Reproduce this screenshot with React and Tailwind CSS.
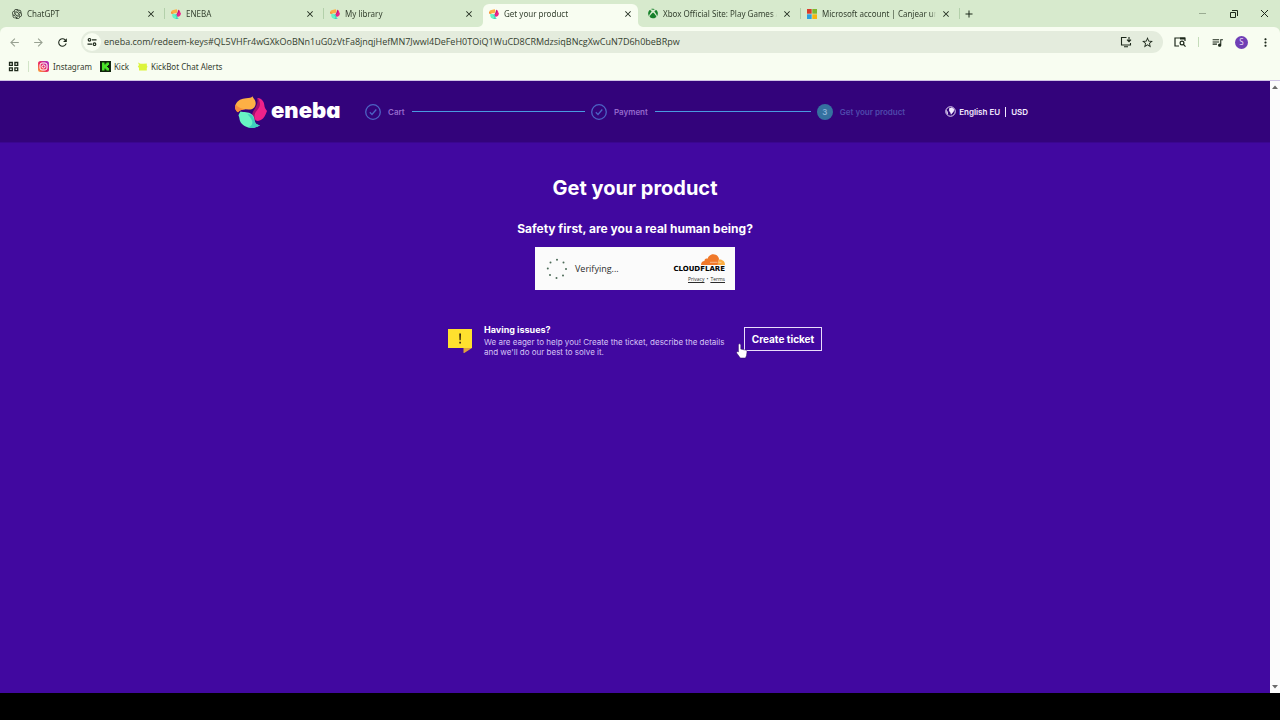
import { SiOpenai } from "react-icons/si";
import { FaXbox } from "react-icons/fa";
import {
  MdArrowBack,
  MdArrowForward,
  MdRefresh,
  MdStarBorder,
  MdMoreVert,
  MdOutlineQueueMusic,
  MdClose,
  MdAdd,
} from "react-icons/md";

function EnebaMark({ className }) {
  return (
    <svg viewBox="0 0 32 32" className={className} aria-hidden="true">
      <path d="M17.500 0.300c.6 2 3.300 3.500 3.200 7.200-.2 4.300-3.700 6.500-7.700 6-4-.5-7.500.2-10 2.800C.3 14.300-.5 11.500.7 8.500 2.300 4.300 7 2.500 11 2.300c3.300-.2 5.500-.5 6.500-2z" fill="#fdb045" />
      <path d="M3 16.300C-.2 14.500-.4 11 .7 8.500c2 3 6 4.500 12.300 5-4-.5-7.500.2-10 2.800z" fill="#f78a3d" />
      <path d="M22.500 2c4.500.5 6.500 3.500 6.800 7 .2 2.500 1.200 4 2.700 6-1 2-1.500 5-4 7.500-2.500 2.200-5.500 3-7 2-2.500-1.500-3-5-1-8.500 2-3.400 4-8 2.500-14z" fill="#f02289" />
      <path d="M22.500 2c2.500 2.500 3 5.500 2 8.500-1 3-5 5.500-5 9.500 0 2 .5 3.500 1.500 4.500-3-1-4.500-4-3.500-7.500C18.700 13 23.500 10 22.500 2z" fill="#a3106f" />
      <path d="M5.500 15.500c3 1 8-.2 11.500 3 3 2.700 2 6 3.500 8.500 1 1.600 2.500 2 4.500 2.200-3 2.300-8 3.300-12.500 2C7.500 29.700 5 26.500 4.500 23c-.2-1.500-.5-2.500-1-3.500.3-1.500 1.200-2.800 2-4z" fill="#68f4c4" />
      <path d="M13 31.300c4-1 5.500-4.300 3.500-7.800-1-1.700-2-3-4-5.300 2 0 3.500.2 4.500 1.300 2.500 2.500 2 5.500 3.500 7.500 1 1.600 2.500 2 4.500 2.200-3 2.300-7.500 3.300-12 2.100z" fill="#3fd0bd" />
    </svg>
  );
}

function MicrosoftMark({ className }) {
  return (
    <svg viewBox="0 0 10 10" className={className} aria-hidden="true">
      <path d="M0 0h4.700v4.700H0z" fill="#d83b2b" />
      <path d="M5.300 0H10v4.700H5.300z" fill="#7cb82f" />
      <path d="M0 5.300h4.700V10H0z" fill="#2b9fe0" />
      <path d="M5.300 5.300H10V10H5.300z" fill="#f5b50f" />
    </svg>
  );
}

const tabs = [
  { title: "ChatGPT", icon: <SiOpenai className="size-[10px] text-[#1d281b]" /> },
  { title: "ENEBA", icon: <EnebaMark className="size-[10px]" /> },
  { title: "My library", icon: <EnebaMark className="size-[10px]" /> },
  { title: "Get your product", icon: <EnebaMark className="size-[10px]" />, active: true },
  { title: "Xbox Official Site: Play Games A", icon: <FaXbox className="size-[11px] text-[#16802a]" /> },
  { title: "Microsoft account | Canjear un", icon: <MicrosoftMark className="size-[10px]" /> },
];

function Tab({ title, icon, active, divider }) {
  return (
    <li className="relative flex h-full w-[159px] min-w-0 items-end">
      <div
        className={
          active
            ? "relative flex h-[23px] w-[155px] items-center gap-[5px] rounded-t-md bg-[#f8fdf1] pr-[5px] pb-1 pl-[6px]"
            : "flex h-[23px] w-[155px] items-center gap-[5px] pr-[5px] pb-1 pl-[6px]"
        }
      >
        {active && (
          <>
            <svg viewBox="0 0 5 5" className="absolute bottom-0 -left-[5px] size-[5px]" aria-hidden="true">
              <path d="M5 0v5H0a5 5 0 0 0 5-5z" fill="#f8fdf1" />
            </svg>
            <svg viewBox="0 0 5 5" className="absolute -right-[5px] bottom-0 size-[5px]" aria-hidden="true">
              <path d="M0 0v5h5a5 5 0 0 1-5-5z" fill="#f8fdf1" />
            </svg>
          </>
        )}
        <span className="flex w-[10px] shrink-0 justify-center">{icon}</span>
        <a href="#" className="min-w-0 flex-1 mask-r-from-95% whitespace-nowrap text-[#34402f]">
          {title}
        </a>
        <button type="button" aria-label={"Close " + title} className="text-[#1d281b]">
          <MdClose className="size-[10px]" />
        </button>
      </div>
      {divider && <span className="absolute right-0 bottom-2 h-[11px] w-px bg-[#b3d0aa]" />}
    </li>
  );
}

function TabStrip() {
  return (
    <div className="flex h-[27px] items-center pl-[6px]">
      <ul className="flex h-full min-w-0">
        {tabs.map((tab, i) => (
          <Tab key={i} {...tab} divider={i !== 2 && i !== 3} />
        ))}
      </ul>
      <button type="button" aria-label="New tab" className="ml-[3px] text-[#1d281b]">
        <MdAdd className="size-[12px]" />
      </button>
      <div className="ml-auto flex items-center gap-5 pr-[10px] text-[#1d281b]">
        <button type="button" aria-label="Minimize" className="flex size-[11px] items-center justify-center">
          <span className="h-px w-[7px] bg-[#9aab92]" />
        </button>
        <button type="button" aria-label="Restore">
          <svg viewBox="0 0 11 11" className="size-[11px]" fill="none" stroke="currentColor" aria-hidden="true">
            <path d="M2.500 4.500h5v5h-5zM4 2.500h5.500V8" />
          </svg>
        </button>
        <button type="button" aria-label="Close window">
          <svg viewBox="0 0 11 11" className="size-[11px]" fill="none" stroke="currentColor" aria-hidden="true">
            <path d="M2 2l7 7M9 2l-7 7" />
          </svg>
        </button>
      </div>
    </div>
  );
}

function Toolbar() {
  return (
    <div className="flex h-[30px] items-center rounded-t-md bg-[#f8fdf1] px-2 text-[#1d281b]">
      <div className="flex items-center gap-[11px]">
        <button type="button" aria-label="Back" className="text-[#98a192]">
          <MdArrowBack className="size-[13px]" />
        </button>
        <button type="button" aria-label="Forward" className="text-[#98a192]">
          <MdArrowForward className="size-[13px]" />
        </button>
        <button type="button" aria-label="Reload">
          <MdRefresh className="size-[13px]" />
        </button>
      </div>
      <div className="ml-3 flex h-[22px] min-w-0 flex-1 items-center rounded-full bg-[#e4ecdd] pr-[9px] pl-[2px]">
        <button
          type="button"
          aria-label="Site information"
          className="flex size-[18px] shrink-0 items-center justify-center rounded-full bg-[#f8fdf1]"
        >
          <svg viewBox="0 0 10 10" className="size-[10px]" fill="none" stroke="currentColor" strokeWidth="1.200" aria-hidden="true">
            <circle cx="2.500" cy="2.800" r="1.300" />
            <path d="M5 2.800h4.500M.5 7.200H5" />
            <circle cx="7.500" cy="7.200" r="1.300" />
          </svg>
        </button>
        <input
          type="text"
          aria-label="Address"
          defaultValue="eneba.com/redeem-keys#QL5VHFr4wGXkOoBNn1uG0zVtFa8jnqjHefMN7Jwwl4DeFeH0TOiQ1WuCD8CRMdzsiqBNcgXwCuN7D6h0beBRpw"
          className="ml-[3px] min-w-0 flex-1 bg-transparent font-['Open_Sans',sans-serif] text-[9px] text-[#34402f] outline-none"
        />
        <button type="button" aria-label="Install app">
          <svg viewBox="0 0 12 12" className="size-[12px]" fill="none" stroke="currentColor" strokeWidth="1.100" aria-hidden="true">
            <path d="M6.500 1.500h-5v7.500h9V7M4 10.700h4M9 1v4.500M7 3.700l2 2 2-2" />
          </svg>
        </button>
        <button type="button" aria-label="Bookmark this page" className="ml-[9px]">
          <MdStarBorder className="size-[13px]" />
        </button>
      </div>
      <button type="button" aria-label="Search side panel" className="ml-[11px]">
        <svg viewBox="0 0 12 12" className="size-[12px]" fill="none" stroke="currentColor" strokeWidth="1.200" aria-hidden="true">
          <path d="M5 10H1V2h10v3" />
          <path d="M6 2.500h5" strokeWidth="2" />
          <circle cx="8" cy="7" r="1.900" />
          <path d="M9.400 8.400l2.100 2.300" />
        </svg>
      </button>
      <span className="mx-3 h-[10px] w-px bg-[#c5dcba]" />
      <button type="button" aria-label="Media controls">
        <MdOutlineQueueMusic className="size-[13px]" />
      </button>
      <button
        type="button"
        aria-label="Profile"
        className="ml-[11px] flex size-[13px] items-center justify-center rounded-full bg-[#6f3fb5] text-[8px] text-[#eadcf8]"
      >
        S
      </button>
      <button type="button" aria-label="Menu" className="ml-[11px]">
        <MdMoreVert className="size-[13px]" />
      </button>
    </div>
  );
}

function Bookmarks() {
  return (
    <nav aria-label="Bookmarks" className="flex h-[23px] items-center bg-[#f8fdf1] pb-1 pl-2 text-[#34402f]">
      <button type="button" aria-label="All apps">
        <svg viewBox="0 0 11 11" className="size-[11px]" fill="none" stroke="#1d281b" strokeWidth="1.300" aria-hidden="true">
          <path d="M1.500 1.500h2.800v2.800H1.500zM6.900 1.500h2.800v2.800H6.900zM1.500 6.900h2.800v2.800H1.500zM6.900 6.900h2.800v2.800H6.900z" />
        </svg>
      </button>
      <span className="mx-[9px] h-[11px] w-px bg-[#d2e4c8]" />
      <a href="#" className="flex items-center gap-1">
        <svg viewBox="0 0 11 11" className="size-[11px]" fill="none" aria-hidden="true">
          <defs>
            <linearGradient id="insta" x1="0" y1="1" x2="1" y2="0">
              <stop offset="0" stopColor="#fbb03b" />
              <stop offset="0.450" stopColor="#ee2a5f" />
              <stop offset="1" stopColor="#a12fd0" />
            </linearGradient>
          </defs>
          <rect width="11" height="11" rx="2.500" fill="url(#insta)" />
          <rect x="2" y="2" width="7" height="7" rx="2" stroke="#fff" />
          <circle cx="5.500" cy="5.500" r="1.600" stroke="#fff" />
        </svg>
        Instagram
      </a>
      <a href="#" className="ml-2 flex items-center gap-[3px]">
        <svg viewBox="0 0 11 11" className="size-[11px]" aria-hidden="true">
          <path d="M0 0h11v11H0z" fill="#10240c" />
          <path d="M2 1.500h2.500v2h1v-1h1v-1H9V4H8v1H7v1h1v1h1v2.500H6.500v-1h-1v-1h-1v2H2z" fill="#4be32a" />
        </svg>
        Kick
      </a>
      <a href="#" className="ml-2 flex items-center gap-[3px]">
        <svg viewBox="0 0 11 11" className="size-[11px]" aria-hidden="true">
          <path d="M1 1.500l2.500 1.300h3L9.800 2.500v2l.7 1.200-.7 1.300v2.500H2V7L.8 5.500 2 4z" fill="#dcf43c" />
        </svg>
        KickBot Chat Alerts
      </a>
    </nav>
  );
}

function DoneBadge() {
  return (
    <svg viewBox="0 0 16 16" className="size-4 shrink-0" fill="none" stroke="#4c63c4" strokeWidth="1.300" aria-hidden="true">
      <circle cx="8" cy="8" r="7.300" />
      <path d="M4.800 8.300l2.200 2.200 4.300-5" />
    </svg>
  );
}

function SiteHeader() {
  return (
    <header className="border-b border-[#3a0690] bg-[#33037b]">
      <div className="mx-auto flex h-[61px] max-w-[800px] items-center">
        <a href="#" className="flex w-[105px] shrink-0 items-center gap-1">
          <EnebaMark className="size-8 shrink-0" />
          <span className="pb-[3px] text-[22px] leading-7 font-black text-white [font-feature-settings:'cv11']">eneba</span>
        </a>
        <ol className="ml-[25px] flex min-w-0 flex-1 items-center text-[8px] font-semibold">
          {["Cart", "Payment"].map((step) => (
            <li key={step} className="flex min-w-0 flex-1 items-center gap-[7px] pr-[6px]">
              <DoneBadge />
              <span className="text-[#9569cc]">{step}</span>
              <span className="h-px flex-1 bg-[#4a9be0]" />
            </li>
          ))}
          <li className="flex items-center gap-[7px]">
            <span className="flex size-4 items-center justify-center rounded-full bg-[#35719f] text-[#8fb4d8]">3</span>
            <span className="text-[#4f49ac]">Get your product</span>
          </li>
        </ol>
        <button
          type="button"
          className="mr-[7px] ml-10 flex shrink-0 items-center gap-[3px] text-[8px] font-semibold text-[#f3ebff]"
        >
          <svg viewBox="0 0 12 12" className="size-[11px]" aria-hidden="true">
            <circle cx="6" cy="6" r="5.200" fill="none" stroke="#f3ebff" />
            <path d="M4.500 2.500l3-1 2.500 2L9.500 6 6.500 9.500 5.800 7 4.500 5.500zM1.200 4l1.600 2 .7 3.500-1.700-1.500z" fill="#f3ebff" />
          </svg>
          <span>English EU</span>
          <span className="mx-[2px] h-[10px] w-px bg-[#f3ebff]" />
          <span>USD</span>
        </button>
      </div>
    </header>
  );
}

function Turnstile() {
  return (
    <section
      aria-label="Verification"
      className="mt-[10px] flex h-[43px] w-[200px] items-center bg-[#fbfbfb] pr-[10px] pl-[11px] font-['Open_Sans',sans-serif] text-[#2c2c2c]"
    >
      <svg viewBox="0 0 22 22" className="size-[22px]" fill="#4d6b58" aria-hidden="true">
        <circle cx="11" cy="1.800" r="1" />
        <circle cx="17.500" cy="4.500" r="1" />
        <circle cx="20" cy="11" r="1" />
        <circle cx="17" cy="17.500" r="1" />
        <circle cx="10.500" cy="20" r="1" />
        <circle cx="4" cy="17" r="1" />
        <circle cx="1.800" cy="10.500" r="1" />
        <circle cx="4.500" cy="4.500" r="1" />
      </svg>
      <span className="ml-[7px] text-[9px]">Verifying...</span>
      <div className="ml-auto flex flex-col items-end">
        <svg viewBox="0 0 24 11" className="h-[11px] w-6" aria-hidden="true">
          <path d="M0 11c0-2.500 1.500-4 3.500-4C3.300 5 5 4 6.500 4.800 7.500 1.800 9.800.2 12.300.2c3 0 5.200 2 5.700 4.600L17 11z" fill="#f0792b" />
          <path d="M16.500 11l1.500-5.500c3.500-.4 6 2 6 5.500z" fill="#faad42" />
          <path d="M9 8.300h7.500M17.500 8.300h3" stroke="#fbe0c6" strokeWidth="0.600" />
        </svg>
        <span className="font-['DejaVu_Sans',sans-serif] text-[7px] leading-[8px] font-bold text-black">CLOUDFLARE</span>
        <span className="mt-[2px] flex gap-[2px] text-[5px] leading-[8px]">
          <a href="#" className="underline">Privacy</a>
          <span>•</span>
          <a href="#" className="underline">Terms</a>
        </span>
      </div>
    </section>
  );
}

function HelpRow() {
  return (
    <section className="relative mt-[34px] flex items-start">
      <svg viewBox="0 0 24 24" className="mt-[5px] size-6 shrink-0" aria-hidden="true">
        <path d="M0 0h24v19H0z" fill="#ffe02e" />
        <path d="M15.500 19H24l-8.500 5.500z" fill="#e0a03c" />
        <path d="M11.200 4.500h1.800l-.3 6.800h-1.200zM11.300 12.800h1.600v1.700h-1.600z" fill="#33200e" />
      </svg>
      <div className="ml-3 w-[252px] text-[8px] leading-[10px] text-[#d6c4f6]">
        <h3 className="mb-[2px] text-[9px] leading-[11px] font-bold text-white">Having issues?</h3>
        <p>
          We are eager to help you! Create the ticket, describe the details
          <br />
          and we'll do our best to solve it.
        </p>
      </div>
      <button
        type="button"
        className="mt-[3px] ml-2 h-6 w-[78px] shrink-0 border border-[#e9defb] text-[10px] font-bold whitespace-nowrap text-white"
      >
        Create ticket
      </button>
      <svg viewBox="0 0 12 16" className="absolute top-[19px] left-[288px] h-4 w-3" aria-hidden="true">
        <path
          d="M3.500.8c.8 0 1.300.6 1.300 1.300v4l4.800 1c.9.200 1.500.8 1.400 1.800l-.5 3.600L9.500 15H4.300L.8 10.200C.2 9.200 1 8.300 2 8.700l.4.300V2.100C2.400 1.400 2.800.8 3.500.8z"
          fill="#fff"
          stroke="#2a0a5c"
          strokeWidth="0.500"
        />
      </svg>
    </section>
  );
}

function Scrollbar() {
  return (
    <div className="flex w-[10px] shrink-0 flex-col justify-between bg-[#fcfcfc] py-1" aria-hidden="true">
      <svg viewBox="0 0 10 4" className="h-1 w-[10px]">
        <path d="M2 4l3-3.500L8 4z" fill="#6b6b6b" />
      </svg>
      <svg viewBox="0 0 10 4" className="h-1 w-[10px]">
        <path d="M2 0l3 3.500L8 0z" fill="#6b6b6b" />
      </svg>
    </div>
  );
}

export default function App() {
  return (
    <div className="flex min-h-screen flex-col bg-black font-['Inter',sans-serif]">
      <div className="border-b border-[#cfc3e6] bg-[#d7eacd] font-['Noto_Sans',sans-serif] text-[8px]">
        <TabStrip />
        <Toolbar />
        <Bookmarks />
      </div>
      <div className="mb-[27px] flex flex-1">
        <div className="min-w-0 flex-1 bg-[#4108a0]">
          <SiteHeader />
          <main className="flex flex-col items-center pt-[33px] text-white">
            <h1 className="text-xl leading-6 font-bold">Get your product</h1>
            <h2 className="mt-[21px] text-xs leading-4 font-bold">Safety first, are you a real human being?</h2>
            <Turnstile />
            <HelpRow />
          </main>
        </div>
        <Scrollbar />
      </div>
    </div>
  );
}
